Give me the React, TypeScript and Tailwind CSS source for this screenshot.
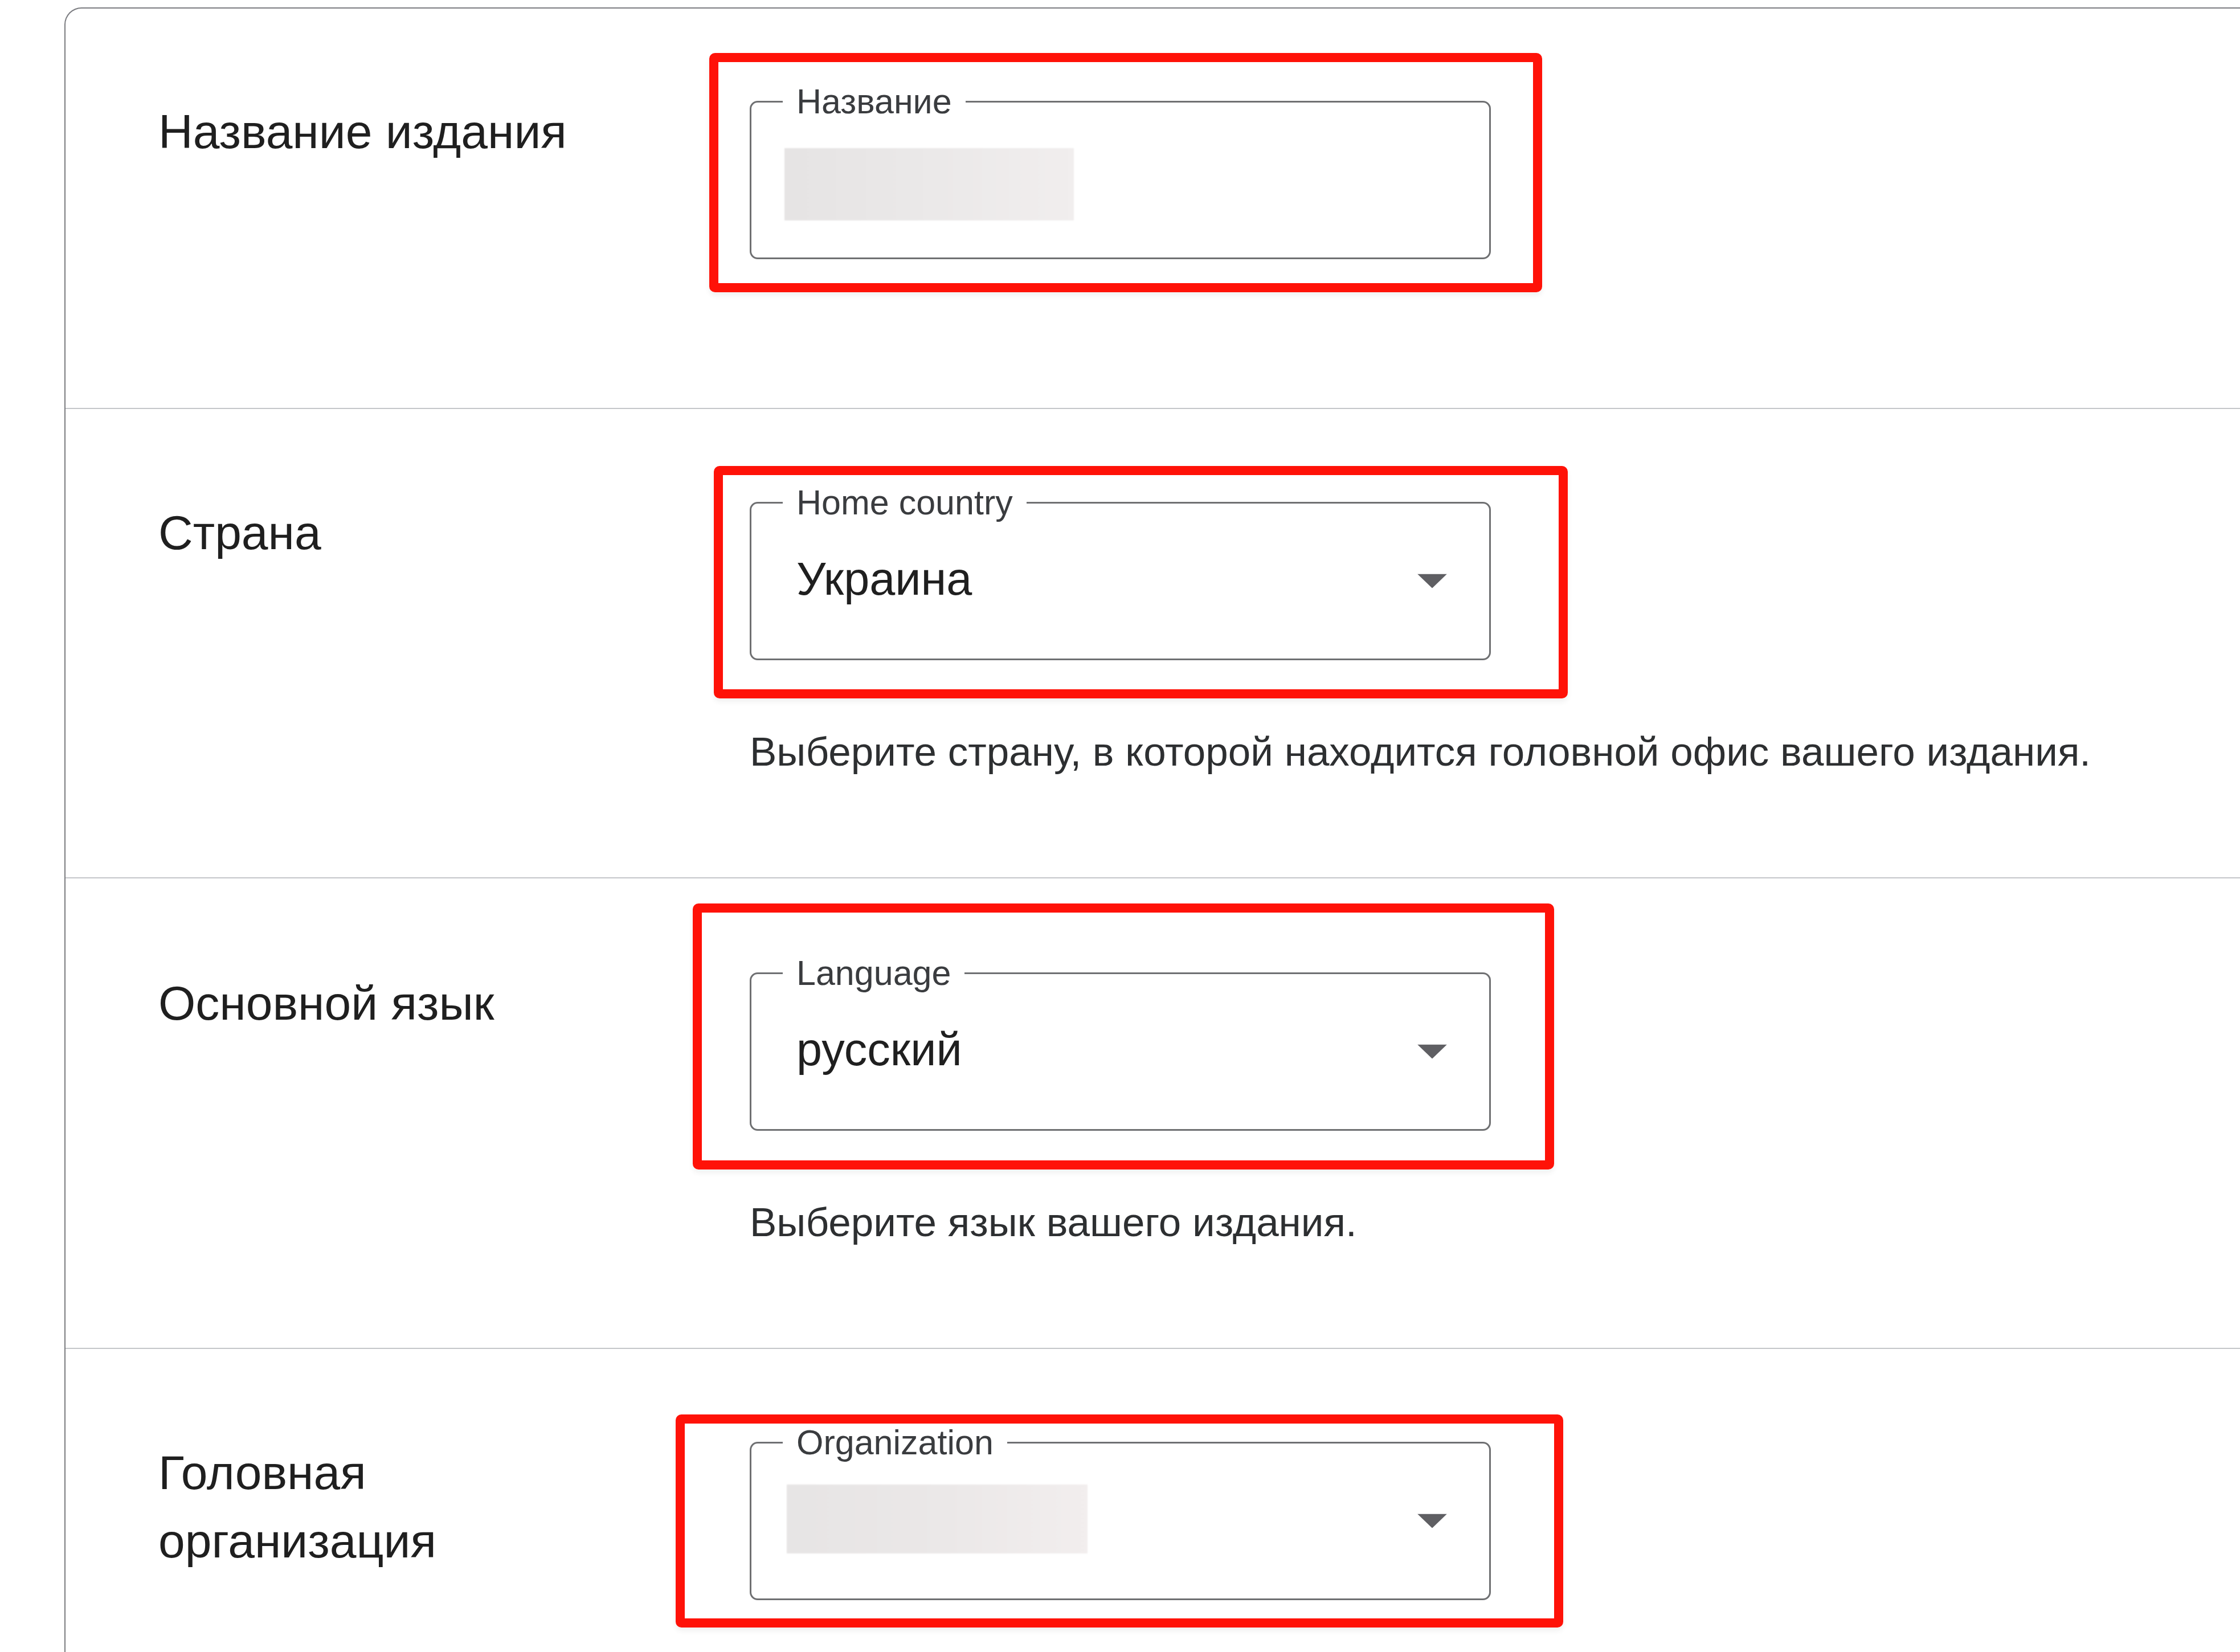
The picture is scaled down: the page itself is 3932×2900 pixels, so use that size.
import React from 'react'

interface FieldProps {
  label: string
  value?: string
  blurred?: 'short' | 'long'
  select?: boolean
  mark: string
}

const Arrow = () => (
  <svg width="52" height="25" viewBox="0 0 52 25" className="absolute right-[74px] top-1/2 -translate-y-1/2">
    <path d="M0 0 L52 0 L26 25 Z" fill="#5f5f63" />
  </svg>
)

const Field = ({ label, value, blurred, select, mark }: FieldProps) => {
  return (
    <div className="relative mt-[6px] w-[1301px]">
      <div className={'pointer-events-none absolute rounded-[10px] border-[16px] border-[#ff1208] shadow-[0_6px_10px_rgba(0,0,0,0.06)] ' + mark} />
      <div className="relative h-[278px] rounded-[14px] border-[3px] border-[#6f7072]">
        <span className="absolute left-[55px] top-[-2px] -translate-y-1/2 bg-white px-[24px] text-[61px] leading-none text-[#3a3c3f]">
          {label}
        </span>
        {value ? (
          <div className="flex h-full items-center pb-[8px] pl-[79px] text-[81px] leading-none text-[#1f1f1f]">{value}</div>
        ) : null}
        {blurred === 'short' ? (
          <div className="absolute left-[58px] top-[80px] h-[127px] w-[508px] bg-gradient-to-r from-[#e6e4e4] via-[#ebe9e9] to-[#f1eeee] blur-[1px]" />
        ) : null}
        {blurred === 'long' ? (
          <div className="absolute left-[62px] top-[72px] h-[121px] w-[528px] bg-gradient-to-r from-[#e7e5e5] via-[#ebe8e8] to-[#f2eeee] blur-[1px]" />
        ) : null}
        {select ? <Arrow /> : null}
      </div>
    </div>
  )
}

const Label = ({ children }: { children: React.ReactNode }) => (
  <div className="text-[84px] leading-[120px] text-[#1f1f1f]">{children}</div>
)

const Helper = ({ children }: { children: React.ReactNode }) => (
  <p className="mt-[111px] whitespace-nowrap text-[71px] leading-[100px] text-[#2d2f31]">{children}</p>
)

export default function App() {
  return (
    <div className="h-[2900px] w-full overflow-hidden bg-white pl-[113px] pt-[13px] font-['Liberation_Sans',Arial,sans-serif]">
      <div className="w-[3900px] rounded-tl-[30px] border-l-2 border-t-2 border-[#7b7c80]">
        {/* название */}
        <div className="grid grid-cols-[782px_1301px] gap-x-[256px] border-b-2 border-[#c4c6c9] pb-[261px] pl-[163px] pt-[156px]">
          <Label>Название издания</Label>
          <Field label="Название" blurred="short" mark="-left-[71px] -right-[90px] -top-[84px] -bottom-[58px]" />
        </div>

        {/* страна */}
        <div className="grid grid-cols-[782px_1301px] gap-x-[256px] border-b-2 border-[#c4c6c9] pb-[170px] pl-[163px] pt-[157px]">
          <Label>Страна</Label>
          <div>
            <Field label="Home country" value="Украина" select mark="-left-[63px] -right-[135px] -top-[63px] -bottom-[67px]" />
            <Helper>Выберите страну, в которой находится головной офис вашего издания.</Helper>
          </div>
        </div>

        {/* язык */}
        <div className="grid grid-cols-[782px_1301px] gap-x-[256px] border-b-2 border-[#c4c6c9] pb-[170px] pl-[163px] pt-[159px]">
          <Label>Основной язык</Label>
          <div>
            <Field label="Language" value="русский" select mark="-left-[100px] -right-[111px] -top-[121px] -bottom-[68px]" />
            <Helper>Выберите язык вашего издания.</Helper>
          </div>
        </div>

        {/* организация */}
        <div className="grid grid-cols-[782px_1301px] gap-x-[256px] pb-[200px] pl-[163px] pt-[157px]">
          <Label>Головная организация</Label>
          <Field label="Organization" blurred="long" select mark="-left-[130px] -right-[127px] -top-[48px] -bottom-[48px]" />
        </div>
      </div>
    </div>
  )
}
